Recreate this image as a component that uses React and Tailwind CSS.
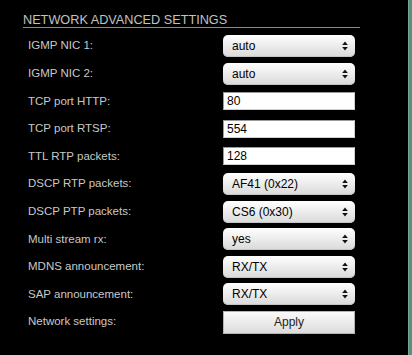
const rows = [
  { label: 'IGMP NIC 1:', type: 'select', value: 'auto' },
  { label: 'IGMP NIC 2:', type: 'select', value: 'auto' },
  { label: 'TCP port HTTP:', type: 'input', value: '80' },
  { label: 'TCP port RTSP:', type: 'input', value: '554' },
  { label: 'TTL RTP packets:', type: 'input', value: '128' },
  { label: 'DSCP RTP packets:', type: 'select', value: 'AF41 (0x22)' },
  { label: 'DSCP PTP packets:', type: 'select', value: 'CS6 (0x30)' },
  { label: 'Multi stream rx:', type: 'select', value: 'yes' },
  { label: 'MDNS announcement:', type: 'select', value: 'RX/TX' },
  { label: 'SAP announcement:', type: 'select', value: 'RX/TX' },
  { label: 'Network settings:', type: 'button', value: 'Apply' },
]

function Arrows() {
  return (
    <svg width="6" height="10" viewBox="0 0 6 10" className="shrink-0">
      <path d="M3 0.5 L5.8 4 L0.2 4 Z" fill="#111" />
      <path d="M3 9.5 L5.8 6 L0.2 6 Z" fill="#111" />
    </svg>
  )
}

function Control({ row }) {
  if (row.type === 'select') {
    return (
      <div className="flex h-[22px] w-[132px] items-center justify-between rounded-[5px] bg-gradient-to-b from-white to-[#d9d9d9] pl-[9px] pr-[7px] text-[12px] text-black shadow-[inset_0_-1px_0_#c4c4c4]">
        <span>{row.value}</span>
        <Arrows />
      </div>
    )
  }
  if (row.type === 'input') {
    return (
      <div className="flex h-[18px] w-[132px] items-center border border-[#9a9a9a] border-b-[#d0d0d0] border-r-[#d0d0d0] bg-white pl-[3px] text-[12px] text-black">
        {row.value}
      </div>
    )
  }
  return (
    <button className="mt-[1px] h-[23px] w-[132px] border border-[#b4b4b4] bg-gradient-to-b from-[#fafafa] to-[#dcdcdc] text-[12px] text-[#222]">
      {row.value}
    </button>
  )
}

export default function App() {
  return (
    <div className="flex h-[355px] w-[412px] bg-black font-['Liberation_Sans',Arial,sans-serif]">
      <div className="flex-1 pl-[23px] pt-[13px]">
        <h1 className="h-[15px] w-[337px] border-b border-[#8a8a8a] text-[12.7px] leading-[14px] text-[#c2c2c2]">
          NETWORK ADVANCED SETTINGS
        </h1>
        <div className="mt-[7px] flex flex-col gap-[5.6px]">
          {rows.map((row) => (
            <div key={row.label} className="flex h-[22px] items-center">
              <div className="w-[200px] pl-[5px] text-[11.5px] text-[#c8c8c8]">{row.label}</div>
              <Control row={row} />
            </div>
          ))}
        </div>
      </div>
      <div className="w-[4px] border-l border-[#74a595] bg-[#5a8f7f]" />
    </div>
  )
}
